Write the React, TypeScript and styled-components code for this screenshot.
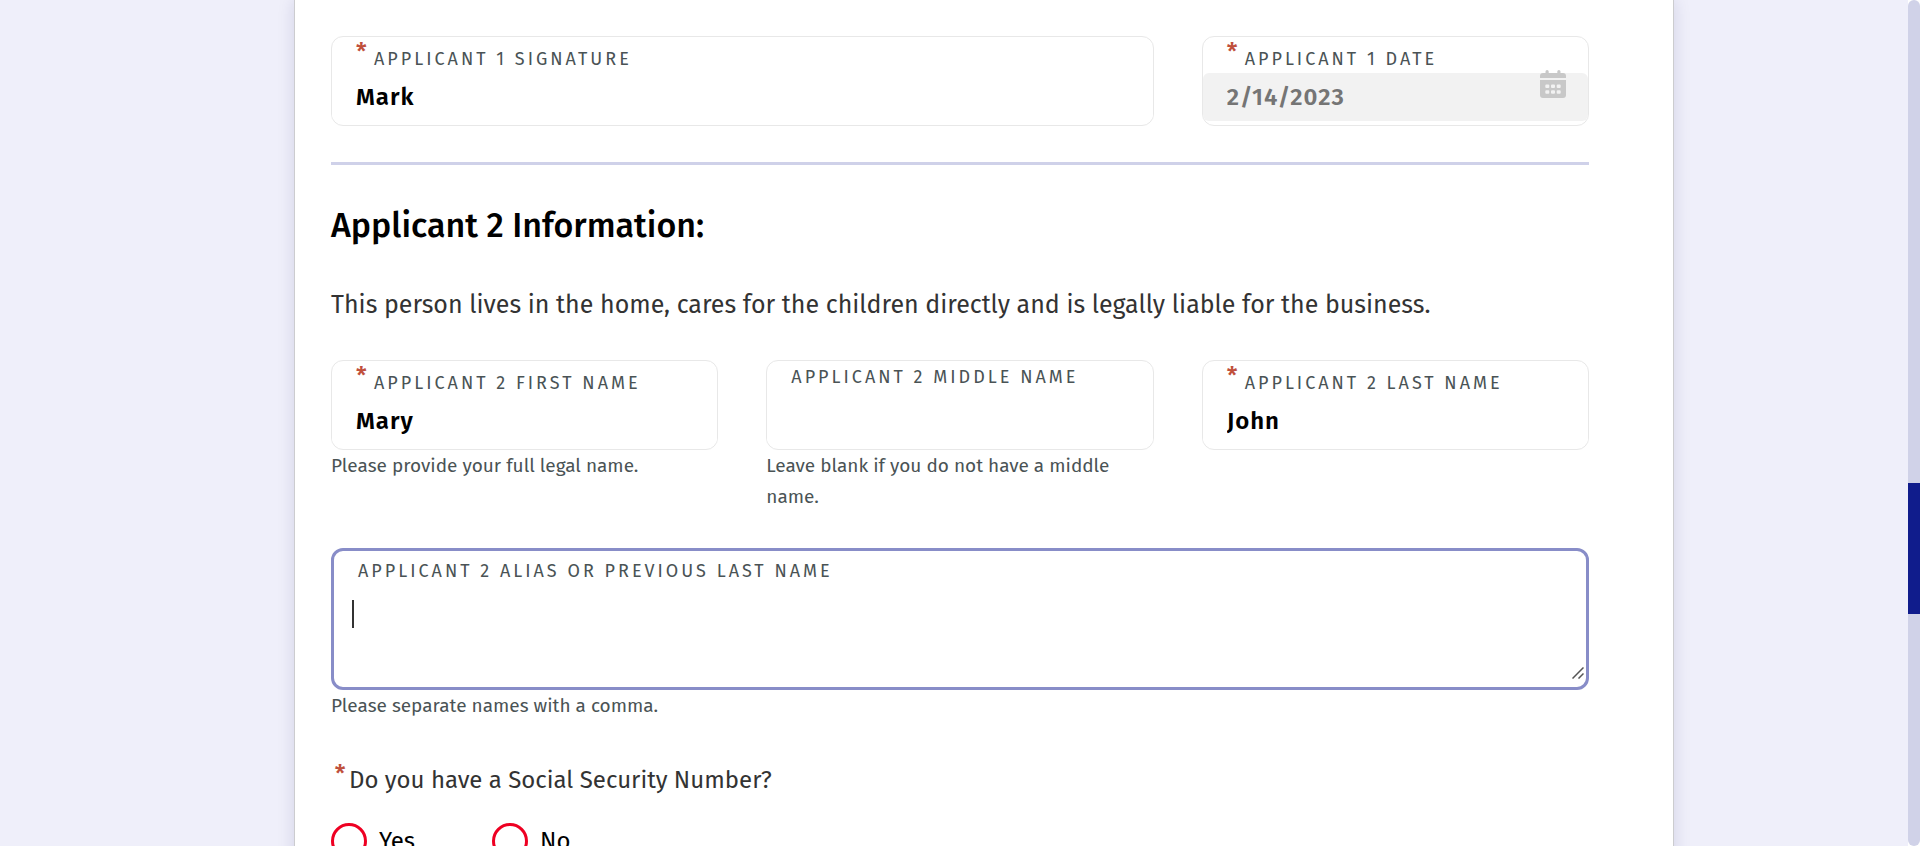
import React, { useState } from "react";
import styled, { createGlobalStyle, css } from "styled-components";

const GlobalStyle = createGlobalStyle`
  *, *::before, *::after { box-sizing: border-box; }
  body {
    margin: 0;
    background: #efeffa;
    color: #333333;
    font-family: "Trebuchet MS", "Fira Sans", "Open Sans", sans-serif;
  }
`;

const Shell = styled.div`
  display: flex;
  height: 100vh;
  overflow: hidden;
`;

const Scroller = styled.main`
  flex: 1;
  min-width: 0;
  padding-left: 60px;
  overflow: hidden;
`;

const Card = styled.form`
  max-width: 1380px;
  min-height: 100%;
  margin: 0 auto;
  padding: 36px 84px 36px 36px;
  background: #ffffff;
  border: solid #cccccf;
  border-width: 0 1px;
  box-shadow: 0 0 16px rgba(20, 24, 90, 0.13);
`;

const TrackWell = styled.div`
  display: flex;
  background: #ffffff;
`;

const Track = styled.div`
  width: 12px;
  background: #d0d2e8;
  border-radius: 6px;
`;

const Thumb = styled.div`
  height: 131px;
  margin-top: 57.1vh;
  background: #101c8c;
`;

const Row = styled.div`
  display: grid;
  grid-template-columns: repeat(3, minmax(0, 1fr));
  column-gap: 48px;
`;

const Cell = styled.div<{ $span?: number }>`
  grid-column: span ${(p) => p.$span ?? 1};
`;

const FieldBox = styled.div<{ $focused?: boolean }>`
  position: relative;
  display: flex;
  flex-direction: column;
  border: 1px solid #e8e8e8;
  border-radius: 12px;
  padding-bottom: 4px;
  ${(p) =>
    p.$focused &&
    css`
      border: 3px solid #888dc8;
      padding-bottom: 6px;
    `}
`;

const FieldLabel = styled.label<{ $tall?: boolean }>`
  display: flex;
  height: ${(p) => (p.$tall ? 40 : 36)}px;
  padding: ${(p) => (p.$tall ? 8 : 4)}px 24px 0;
  font-size: 18px;
  line-height: 24px;
  letter-spacing: 3px;
  text-transform: uppercase;
  white-space: nowrap;
  color: #4a5355;
`;

const LabelText = styled.span<{ $required?: boolean }>`
  padding-top: ${(p) => (p.$required ? 6 : 0)}px;
`;

const Star = styled.span<{ $centered?: boolean }>`
  width: 18px;
  flex: none;
  font-size: 24px;
  font-weight: 500;
  line-height: ${(p) => (p.$centered ? 34 : 22)}px;
  letter-spacing: 0;
  text-align: ${(p) => (p.$centered ? "center" : "left")};
  color: #c0503c;
`;

const TextInput = styled.input`
  width: 100%;
  height: 48px;
  padding: 0 24px;
  border: 0;
  border-radius: 6px;
  outline: 0;
  background: #ffffff;
  color: #000000;
  font-family: inherit;
  font-size: 24px;
  font-weight: 600;
  letter-spacing: 1px;
  &:disabled {
    background: #f2f2f2;
    color: #757575;
  }
`;

const TextArea = styled.textarea`
  display: block;
  width: 100%;
  height: 90px;
  padding: 9px 18px;
  border: 0;
  outline: 0;
  background: transparent;
  color: #333333;
  resize: vertical;
  font-family: inherit;
  font-size: 24px;
  line-height: 28px;
  &::-webkit-resizer {
    background: transparent;
  }
`;

const Caret = styled.span`
  position: absolute;
  top: 49px;
  left: 18px;
  width: 2px;
  height: 28px;
  background: #333333;
  pointer-events: none;
`;

const Grip = styled.svg`
  position: absolute;
  right: 2px;
  bottom: 8px;
  pointer-events: none;
`;

const CalendarButton = styled.button`
  position: absolute;
  top: 33px;
  right: 22px;
  padding: 0;
  border: 0;
  background: none;
  line-height: 0;
`;

const Helper = styled.p`
  margin: 0;
  font-size: 19px;
  line-height: 31px;
  color: #4a5355;
`;

const Divider = styled.hr`
  height: 3px;
  margin: 36px 0 40px;
  border: 0;
  background: #cfd1e9;
`;

const Heading = styled.h2`
  margin: 0 0 40px;
  font-size: 34px;
  line-height: 41px;
  font-weight: 500;
  color: #000000;
`;

const Intro = styled.p`
  margin: 0 0 36px;
  font-size: 25px;
  line-height: 38px;
`;

const Section = styled.div`
  margin-top: 36px;
`;

const Question = styled.fieldset`
  margin: 36px 0 0;
  padding: 0;
  border: 0;
`;

const Legend = styled.legend`
  display: flex;
  margin-bottom: 20px;
  padding: 0;
  font-size: 24px;
  line-height: 46px;
`;

const Choices = styled.div`
  display: flex;
  gap: 48px;
`;

const Choice = styled.label`
  display: flex;
  align-items: center;
  gap: 12px;
  width: 113px;
  font-size: 24px;
  line-height: 36px;
  color: #000000;
`;

const Radio = styled.input`
  appearance: none;
  flex: none;
  width: 36px;
  height: 36px;
  margin: 0;
  border: 3px solid #ee0022;
  border-radius: 50%;
  background: #ffffff;
  &:checked {
    box-shadow: inset 0 0 0 6px #ffffff;
    background: #ee0022;
  }
`;

const CalendarIcon = () => (
  <svg width="26" height="28" viewBox="0 0 26 28" fill="#c8c8c8" aria-hidden="true">
    <path d="M3 3H5.500V1.600a1.600 1.600 0 0 1 3.200 0V3h8.600V1.600a1.600 1.600 0 0 1 3.200 0V3H23a3 3 0 0 1 3 3v2H0V6a3 3 0 0 1 3-3Z" />
    <path
      fillRule="evenodd"
      d="M0 10h26v15a3 3 0 0 1-3 3H3a3 3 0 0 1-3-3Z
        M6.300 14.500h2a1 1 0 0 1 1 1v1.500a1 1 0 0 1-1 1h-2a1 1 0 0 1-1-1v-1.500a1 1 0 0 1 1-1Z
        M12 14.500h2a1 1 0 0 1 1 1v1.500a1 1 0 0 1-1 1h-2a1 1 0 0 1-1-1v-1.500a1 1 0 0 1 1-1Z
        M17.700 14.500h2a1 1 0 0 1 1 1v1.500a1 1 0 0 1-1 1h-2a1 1 0 0 1-1-1v-1.500a1 1 0 0 1 1-1Z
        M6.300 20.300h2a1 1 0 0 1 1 1v1.500a1 1 0 0 1-1 1h-2a1 1 0 0 1-1-1v-1.500a1 1 0 0 1 1-1Z
        M12 20.300h2a1 1 0 0 1 1 1v1.500a1 1 0 0 1-1 1h-2a1 1 0 0 1-1-1v-1.500a1 1 0 0 1 1-1Z
        M17.700 20.300h2a1 1 0 0 1 1 1v1.500a1 1 0 0 1-1 1h-2a1 1 0 0 1-1-1v-1.500a1 1 0 0 1 1-1Z"
    />
  </svg>
);

interface FieldProps {
  id: string;
  label: string;
  value?: string;
  required?: boolean;
  disabled?: boolean;
  helper?: string;
  span?: number;
  children?: React.ReactNode;
}

const Field = ({ id, label, value, required, disabled, helper, span, children }: FieldProps) => (
  <Cell $span={span}>
    <FieldBox>
      <FieldLabel htmlFor={id}>
        {required && <Star>*</Star>}
        <LabelText $required={required}>{label}</LabelText>
      </FieldLabel>
      <TextInput id={id} type="text" defaultValue={value} required={required} disabled={disabled} />
      {children}
    </FieldBox>
    {helper && <Helper>{helper}</Helper>}
  </Cell>
);

export default function App() {
  const [alias, setAlias] = useState("");
  const [touched, setTouched] = useState(false);

  return (
    <Shell>
      <GlobalStyle />
      <Scroller>
        <Card>
          <Row>
            <Field id="a1-signature" label="Applicant 1 Signature" value="Mark" required span={2} />
            <Field id="a1-date" label="Applicant 1 Date" value="2/14/2023" required disabled>
              <CalendarButton type="button" aria-label="Choose date" disabled>
                <CalendarIcon />
              </CalendarButton>
            </Field>
          </Row>
          <Divider />
          <Heading>Applicant 2 Information:</Heading>
          <Intro>
            This person lives in the home, cares for the children directly and is legally liable for
            the business.
          </Intro>
          <Row>
            <Field
              id="a2-first"
              label="Applicant 2 First Name"
              value="Mary"
              required
              helper="Please provide your full legal name."
            />
            <Field
              id="a2-middle"
              label="Applicant 2 Middle Name"
              helper="Leave blank if you do not have a middle name."
            />
            <Field id="a2-last" label="Applicant 2 Last Name" value="John" required />
          </Row>
          <Section>
            <FieldBox $focused>
              <FieldLabel htmlFor="a2-alias" $tall>
                <LabelText>Applicant 2 Alias or Previous Last Name</LabelText>
              </FieldLabel>
              <TextArea
                id="a2-alias"
                value={alias}
                onFocus={() => setTouched(true)}
                onChange={(e) => setAlias(e.target.value)}
              />
              {!touched && <Caret />}
              <Grip width="12" height="12" viewBox="0 0 12 12" aria-hidden="true">
                <path d="M0.500 11.500 11.500 0.500M6.500 11.500 11.500 6.500" stroke="#555555" strokeWidth="1.500" />
              </Grip>
            </FieldBox>
            <Helper>Please separate names with a comma.</Helper>
          </Section>
          <Question>
            <Legend>
              <Star $centered>*</Star>
              Do you have a Social Security Number?
            </Legend>
            <Choices>
              <Choice>
                <Radio type="radio" name="ssn" value="yes" />
                Yes
              </Choice>
              <Choice>
                <Radio type="radio" name="ssn" value="no" />
                No
              </Choice>
            </Choices>
          </Question>
        </Card>
      </Scroller>
      <TrackWell>
        <Track>
          <Thumb />
        </Track>
      </TrackWell>
    </Shell>
  );
}
